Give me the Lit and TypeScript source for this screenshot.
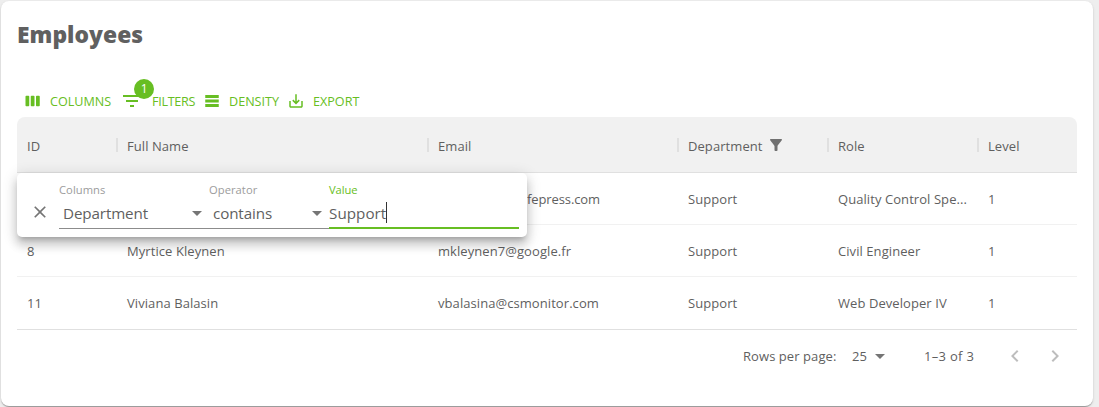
import { LitElement, html, css, svg } from "lit";
import { customElement, property } from "lit/decorators.js";

const icons: Record<string, string> = {
  columns:
    "M6 5H3c-.55 0-1 .45-1 1v12c0 .55.45 1 1 1h3c.55 0 1-.45 1-1V6c0-.55-.45-1-1-1zm14 0h-3c-.55 0-1 .45-1 1v12c0 .55.45 1 1 1h3c.55 0 1-.45 1-1V6c0-.55-.45-1-1-1zm-7 0h-3c-.55 0-1 .45-1 1v12c0 .55.45 1 1 1h3c.55 0 1-.45 1-1V6c0-.55-.45-1-1-1z",
  filter: "M10 18h4v-2h-4v2zM3 6v2h18V6H3zm3 7h12v-2H6v2z",
  density: "M21 8H3V4h18v4zm0 2H3v4h18v-4zm0 6H3v4h18v-4z",
  save: "M19 12v7H5v-7H3v7c0 1.1.9 2 2 2h14c1.1 0 2-.9 2-2v-7h-2zm-6 .67l2.59-2.58L17 11.5l-5 5-5-5 1.41-1.41L11 12.67V3h2z",
  funnel:
    "M4.25 5.61C6.27 8.2 10 13 10 13v6c0 .55.45 1 1 1h2c.55 0 1-.45 1-1v-6s3.72-4.8 5.74-7.39c.51-.66.04-1.61-.79-1.61H5.04c-.83 0-1.3.95-.79 1.61z",
  close:
    "M19 6.41L17.59 5 12 10.59 6.41 5 5 6.41 10.59 12 5 17.59 6.41 19 12 13.41 17.59 19 19 17.59 13.41 12z",
  caret: "M7 10l5 5 5-5z",
  prev: "M15.41 7.41L14 6l-6 6 6 6 1.41-1.41L10.83 12z",
  next: "M10 6L8.59 7.41 13.17 12l-4.58 4.59L10 18l6-6z",
};

@customElement("grid-icon")
class GridIcon extends LitElement {
  @property() name = "";
  @property({ type: Number }) size = 24;
  static styles = css`
    :host { display: block; flex: none; }
    svg { display: block; fill: currentColor; }
  `;
  render() {
    return html`<svg width=${this.size} height=${this.size} viewBox="0 0 24 24">
      ${svg`<path d=${icons[this.name]}></path>`}
    </svg>`;
  }
}

@customElement("filter-panel")
class FilterPanel extends LitElement {
  static styles = css`
    :host {
      display: flex;
      box-sizing: border-box;
      width: 510px;
      height: 64px;
      padding: 8px 8px 8px 13px;
      background: #fff;
      border-radius: 5px;
      color: #5f5f5f;
      box-shadow: 0 5px 5px -3px rgba(0, 0, 0, 0.2), 0 8px 10px 1px rgba(0, 0, 0, 0.14),
        0 3px 14px 2px rgba(0, 0, 0, 0.12);
    }
    .close { width: 29px; padding-top: 21px; color: #757575; }
    .field {
      display: flex;
      flex-direction: column;
      box-sizing: border-box;
      height: 48px;
      border-bottom: 1px solid #8c8c8c;
    }
    .column { width: 150px; }
    .operator { width: 120px; }
    .value { width: 190px; height: 48px; border-bottom: 2px solid #67be23; }
    .label {
      height: 17px;
      line-height: 17px;
      font-size: 11.2px;
      letter-spacing: 0.05px;
      color: #9c9c9c;
      white-space: nowrap;
    }
    .value .label { color: #67be23; letter-spacing: -0.1px; }
    .input {
      display: flex;
      align-items: center;
      height: 30px;
      padding-left: 4px;
      font-size: 15.2px;
      white-space: nowrap;
    }
    .value .input { padding-left: 0; }
    .text { flex: 1; line-height: 22px; letter-spacing: -0.12px; }
    .value .text { flex: none; letter-spacing: 0.05px; }
    .input grid-icon { color: #757575; margin-bottom: 1px; }
    .cursor { width: 1px; height: 21px; margin-bottom: 1px; background: #333; }
  `;
  render() {
    return html`
      <div class="close"><grid-icon name="close" size="20"></grid-icon></div>
      <div class="field column">
        <div class="label">Columns</div>
        <div class="input"><span class="text">Department</span><grid-icon name="caret"></grid-icon></div>
      </div>
      <div class="field operator">
        <div class="label">Operator</div>
        <div class="input"><span class="text">contains</span><grid-icon name="caret"></grid-icon></div>
      </div>
      <div class="field value">
        <div class="label">Value</div>
        <div class="input"><span class="text">Support</span><span class="cursor"></span></div>
      </div>
    `;
  }
}

@customElement("app-root")
class AppRoot extends LitElement {
  columns = ["ID", "Full Name", "Email", "Department", "Role", "Level"];
  rows = [
    ["", "", "", "Support", "Quality Control Spe...", "1"],
    ["8", "Myrtice Kleynen", "mkleynen7@google.fr", "Support", "Civil Engineer", "1"],
    ["11", "Viviana Balasin", "vbalasina@csmonitor.com", "Support", "Web Developer IV", "1"],
  ];

  static styles = css`
    :host {
      display: block;
      box-sizing: border-box;
      height: 407px;
      padding: 1px 6px 1px 1px;
      background: #eeeeee;
      overflow: hidden;
      font-family: "Open Sans", "Noto Sans", sans-serif;
      font-size: 13px;
      color: #5f5f5f;
    }
    .card {
      box-sizing: border-box;
      height: 405px;
      padding: 16px;
      background: #fff;
      border-radius: 8px;
      box-shadow: 0 2px 1px -1px rgba(0, 0, 0, 0.2), 0 1px 1px 0 rgba(0, 0, 0, 0.14),
        0 1px 3px 0 rgba(0, 0, 0, 0.12);
    }
    h1 {
      margin: 0;
      height: 68px;
      line-height: 36px;
      font-size: 22.8px;
      font-weight: 800;
      letter-spacing: 0.05px;
      color: #606060;
    }
    .toolbar { display: flex; height: 32px; padding-left: 7px; color: #67be23; }
    .tool { display: flex; align-items: center; height: 32px; font-size: 12.6px; }
    .t-columns { width: 96px; gap: 8px; }
    .t-filters { width: 83px; gap: 8px; letter-spacing: -0.3px; }
    .t-density { width: 84px; gap: 8px; }
    .t-export { gap: 8px; }
    .badged { position: relative; }
    .badge {
      position: absolute;
      left: 14px;
      top: -10px;
      width: 20px;
      height: 20px;
      border-radius: 10px;
      background: #67be23;
      color: #fff;
      font-size: 12px;
      line-height: 20px;
      text-align: center;
    }
    .grid { position: relative; }
    .row {
      display: grid;
      grid-template-columns: 100px 311px 250px 150px 150px 99px;
      align-items: center;
      box-sizing: border-box;
      height: 52px;
      border-bottom: 1px solid #f1f1f1;
    }
    .row.last { height: 53px; padding-bottom: 1px; border-bottom-color: #e0e0e0; }
    .row.head {
      height: 56px;
      background: #f1f1f1;
      border-bottom-color: #e0e0e0;
      border-radius: 8px 8px 0 0;
    }
    .cell {
      padding: 1px 0 0 10px;
      line-height: 20px;
      letter-spacing: 0.07px;
      white-space: nowrap;
    }
    .head .cell {
      display: flex;
      align-items: center;
      padding: 0 0 0 10px;
      height: 30px;
    }
    .name { flex: none; padding-top: 3px; }
    .head grid-icon { margin-left: 4px; color: #707070; }
    .sep { width: 2px; height: 14px; margin: 0 -1px 0 auto; background: #e0e0e0; }
    .clipped { padding-left: 99px; letter-spacing: -0.1px; }
    .panel { position: absolute; left: 0; top: 56px; }
    .footer {
      display: flex;
      align-items: center;
      justify-content: flex-end;
      height: 52px;
      padding-right: 10px;
    }
    .footer span { line-height: 20px; padding-bottom: 1px; white-space: nowrap; }
    .per { width: 109px; letter-spacing: 0.07px; }
    .count { width: 16px; }
    .range { width: 79px; margin-left: 32px; letter-spacing: 0.3px; }
    .footer grid-icon { color: #757575; }
    .footer .nav { color: #bdbdbd; }
    .next { margin-left: 16px; }
  `;

  render() {
    return html`
      <div class="card">
        <h1>Employees</h1>
        <div class="toolbar">
          <div class="tool t-columns"><grid-icon name="columns" size="18"></grid-icon><span>COLUMNS</span></div>
          <div class="tool t-filters">
            <div class="badged"><grid-icon name="filter"></grid-icon><span class="badge">1</span></div>
            <span>FILTERS</span>
          </div>
          <div class="tool t-density"><grid-icon name="density" size="18"></grid-icon><span>DENSITY</span></div>
          <div class="tool t-export"><grid-icon name="save" size="18"></grid-icon><span>EXPORT</span></div>
        </div>
        <div class="grid">
          <div class="row head">
            ${this.columns.map(
              (c, i) => html`<div class="cell">
                <span class="name">${c}</span>
                ${c === "Department" ? html`<grid-icon name="funnel" size="18"></grid-icon>` : ""}
                ${i < this.columns.length - 1 ? html`<span class="sep"></span>` : ""}
              </div>`
            )}
          </div>
          ${this.rows.map(
            (r, n) => html`<div class="row ${n === 2 ? "last" : ""}">
              ${r.map((v, i) =>
                n === 0 && i === 2
                  ? html`<div class="cell clipped">fepress.com</div>`
                  : html`<div class="cell">${v}</div>`
              )}
            </div>`
          )}
          <filter-panel class="panel"></filter-panel>
        </div>
        <div class="footer">
          <span class="per">Rows per page:</span>
          <span class="count">25</span>
          <grid-icon name="caret"></grid-icon>
          <span class="range">1–3 of 3</span>
          <grid-icon class="nav" name="prev"></grid-icon>
          <grid-icon class="nav next" name="next"></grid-icon>
        </div>
      </div>
    `;
  }
}
